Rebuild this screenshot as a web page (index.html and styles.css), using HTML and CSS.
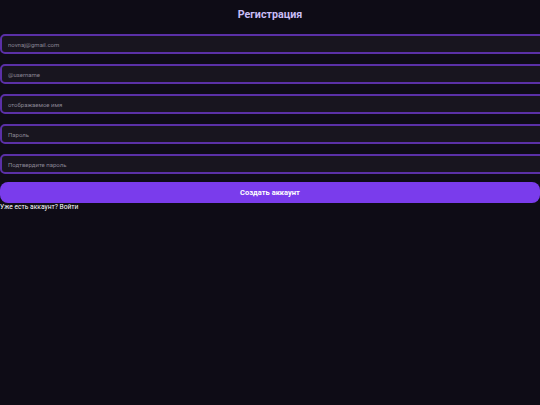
FILE: index.html
```html
<!DOCTYPE html>
<html lang="ru">
<head>
<meta charset="utf-8">
<link rel="stylesheet" href="styles.css">
</head>
<body>
<div class="page">
  <h1 class="title">Регистрация</h1>
  <form class="form">
    <input class="field" type="email" placeholder="novnaj@gmail.com">
    <input class="field" type="text" placeholder="@username">
    <input class="field" type="text" placeholder="отображаемое имя">
    <input class="field" type="password" placeholder="Пароль">
    <input class="field" type="password" placeholder="Подтвердите пароль">
    <button class="submit" type="button">Создать аккаунт</button>
  </form>
  <div class="login">Уже есть аккаунт? Войти</div>
</div>
</body>
</html>
```
FILE: styles.css
```css
html, body {
  margin: 0;
  padding: 0;
  background: #0e0c16;
  overflow: hidden;
}
body {
  font-family: Roboto, "Liberation Sans", Arial, sans-serif;
  height: 405px;
}
.page {
  display: flex;
  flex-direction: column;
}
.title {
  margin: 8px 0 0;
  height: 26px;
  font-size: 10.7px;
  line-height: 13px;
  font-weight: bold;
  color: #c9bdf5;
  text-align: center;
}
.form {
  display: flex;
  flex-direction: column;
  gap: 10px;
}
.field {
  box-sizing: content-box;
  width: 100%;
  height: 16px;
  margin: 0;
  padding: 0 6px;
  border: 2px solid #5a30a6;
  border-radius: 5px;
  background: #18151f;
  color: #ddd;
  font-family: Roboto, "Liberation Sans", Arial, sans-serif;
  font-size: 6px;
  outline: none;
}
.field::placeholder {
  color: #8a8594;
}
.submit {
  margin-top: -2px;
  height: 21px;
  width: 100%;
  border: 0;
  border-radius: 8px;
  background: #7a3cec;
  color: #ffffff;
  font-family: Roboto, "Liberation Sans", Arial, sans-serif;
  font-size: 7.5px;
  font-weight: bold;
}
.login {
  font-size: 6.7px;
  line-height: 8px;
  font-weight: normal;
  color: #ffffff;
}
```
